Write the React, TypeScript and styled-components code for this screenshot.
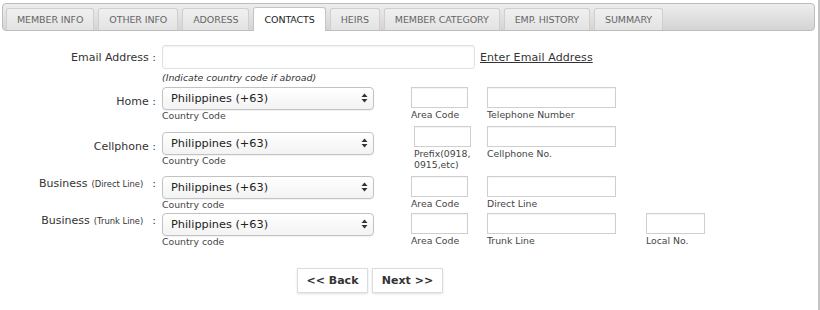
import styled, { createGlobalStyle } from 'styled-components'

const GlobalStyle = createGlobalStyle`
  html, body {
    margin: 0;
    padding: 0;
    background: #fff;
    font-family: "DejaVu Sans", Verdana, sans-serif;
    color: #333;
  }
`

const tabs = [
  'MEMBER INFO',
  'OTHER INFO',
  'ADORESS',
  'CONTACTS',
  'HEIRS',
  'MEMBER CATEGORY',
  'EMP. HISTORY',
  'SUMMARY',
]

const ArrowIcon = () => (
  <svg width="7" height="10" viewBox="0 0 7 10">
    <path d="M3.5 0.5 L6.5 4 L0.5 4 Z" fill="#333" />
    <path d="M3.5 9.5 L6.5 6 L0.5 6 Z" fill="#333" />
  </svg>
)

const CountrySelect = ({ caption, top = 0 }: { caption: string; top?: number }) => (
  <SelectCell $top={top}>
    <SelectBox>
      <Select defaultValue="PH">
        <option value="PH">Philippines (+63)</option>
      </Select>
      <SelectArrow>
        <ArrowIcon />
      </SelectArrow>
    </SelectBox>
    <Caption>{caption}</Caption>
  </SelectCell>
)

const PhoneField = ({
  col,
  width,
  caption,
  offset = 0,
}: {
  col: number
  width: number
  caption: React.ReactNode
  offset?: number
}) => (
  <PhoneCell $col={col} $offset={offset}>
    <TextInput $width={width} />
    <Caption>{caption}</Caption>
  </PhoneCell>
)

const App = () => {
  return (
    <>
      <GlobalStyle />
      <Panel>
        <TabBar>
          {tabs.map((t) => (
            <Tab key={t} $active={t === 'CONTACTS'}>
              {t}
            </Tab>
          ))}
        </TabBar>

        <Form>
          <EmailRow>
            <EmailLabel>Email Address :</EmailLabel>
            <EmailInput />
            <EmailLink>Enter Email Address</EmailLink>
          </EmailRow>
          <Hint>(Indicate country code if abroad)</Hint>

          <Row $gap={5}>
            <Label $top={8}>Home :</Label>
            <CountrySelect caption="Country Code" />
            <PhoneField col={76} width={57} caption="Area Code" />
            <PhoneField col={159} width={129} caption="Telephone Number" />
          </Row>

          <Row $gap={6}>
            <Label $top={14}>Cellphone :</Label>
            <CountrySelect caption="Country Code" top={6} />
            <PhoneField
              col={76}
              width={57}
              offset={3}
              caption={
                <>
                  Prefix(0918,
                  <br />
                  0915,etc)
                </>
              }
            />
            <PhoneField col={159} width={129} caption="Cellphone No." />
          </Row>

          <Row $gap={3}>
            <Label $top={1}>
              Business<Small>(Direct Line)</Small>:
            </Label>
            <CountrySelect caption="Country code" />
            <PhoneField col={76} width={57} caption="Area Code" />
            <PhoneField col={159} width={129} caption="Direct Line" />
          </Row>

          <Row $gap={0}>
            <Label $top={1}>
              Business<Small>(Trunk Line)</Small>:
            </Label>
            <CountrySelect caption="Country code" />
            <PhoneField col={76} width={57} caption="Area Code" />
            <PhoneField col={159} width={129} caption="Trunk Line" />
            <PhoneField col={76} width={59} caption="Local No." />
          </Row>

          <Buttons>
            <Button>&lt;&lt; Back</Button>
            <Button>Next &gt;&gt;</Button>
          </Buttons>
        </Form>
      </Panel>
    </>
  )
}

const Panel = styled.div`
  width: 820px;
  height: 310px;
  box-sizing: border-box;
  border-right: 2px solid #c4c4c4;
  padding: 3px 3px 0 2px;
`

const TabBar = styled.div`
  display: flex;
  align-items: flex-end;
  gap: 4px;
  height: 28px;
  box-sizing: border-box;
  padding: 0 0 0 3px;
  background: linear-gradient(#ededed, #d4d4d4);
  border: 1px solid #bdbdbd;
  border-radius: 4px;
`

const Tab = styled.div<{ $active: boolean }>`
  height: ${(p) => (p.$active ? 24 : 22)}px;
  box-sizing: border-box;
  padding: 0 10px;
  display: flex;
  align-items: center;
  font-size: 9.5px;
  letter-spacing: -0.1px;
  color: ${(p) => (p.$active ? '#222' : '#666')};
  background: ${(p) => (p.$active ? '#fff' : 'linear-gradient(#f0f0f0, #e3e3e3)')};
  border: 1px solid ${(p) => (p.$active ? '#c4c4c4' : '#cfcfcf')};
  border-bottom: none;
  border-radius: 3px 3px 0 0;
  margin-bottom: ${(p) => (p.$active ? -1 : 0)}px;
`

const Form = styled.div`
  padding-top: 14px;
`

const Label = styled.div<{ $top: number }>`
  width: 158px;
  flex: none;
  box-sizing: border-box;
  padding-right: 4px;
  margin-top: ${(p) => p.$top}px;
  text-align: right;
  font-size: 11px;
  line-height: 13px;
  color: #333;
  white-space: nowrap;
`

const EmailLabel = styled(Label).attrs({ $top: 0 })``

const Small = styled.span`
  font-size: 8.4px;
  margin: 0 9px 0 4px;
`

const EmailRow = styled.div`
  display: flex;
  align-items: center;
`

const EmailInput = styled.input`
  width: 313px;
  height: 24px;
  box-sizing: border-box;
  border: 1px solid #e0e0e0;
  border-radius: 3px;
  box-shadow: inset 0 1px 2px rgba(0, 0, 0, 0.06);
  margin: 0 0 0 2px;
`

const EmailLink = styled.a`
  margin-left: 5px;
  font-size: 11px;
  color: #333;
  text-decoration: underline;
  letter-spacing: 0.1px;
`

const Hint = styled.div`
  margin: 3px 0 4px 160px;
  font-size: 9.4px;
  line-height: 11px;
  font-style: italic;
  color: #333;
`

const Row = styled.div<{ $gap: number }>`
  display: flex;
  align-items: flex-start;
  margin-bottom: ${(p) => p.$gap}px;
`

const SelectCell = styled.div<{ $top: number }>`
  width: 251px;
  flex: none;
  padding: ${(p) => p.$top}px 0 0 2px;
  box-sizing: border-box;
`

const SelectBox = styled.div`
  position: relative;
  width: 212px;
`

const Select = styled.select`
  appearance: none;
  display: block;
  width: 212px;
  height: 23px;
  margin: 0;
  padding: 0 0 0 8px;
  font-family: inherit;
  font-size: 11.3px;
  color: #222;
  background: linear-gradient(#fff, #f3f3f3);
  border: 1px solid #c2c2c2;
  border-radius: 4px;
  box-shadow: 0 1px 1px rgba(0, 0, 0, 0.06);
`

const SelectArrow = styled.span`
  position: absolute;
  right: 6px;
  top: 6px;
  line-height: 0;
`

const Caption = styled.div`
  font-size: 9.3px;
  color: #444;
  line-height: 11px;
`

const PhoneCell = styled.div<{ $col: number; $offset: number }>`
  width: ${(p) => p.$col}px;
  flex: none;
  padding-left: ${(p) => p.$offset}px;
  box-sizing: border-box;

  ${Caption} {
    margin-top: 1px;
  }
`

const TextInput = styled.input<{ $width: number }>`
  display: block;
  width: ${(p) => p.$width}px;
  height: 21px;
  box-sizing: border-box;
  border: 1px solid #cfcfcf;
  box-shadow: inset 0 1px 1px rgba(0, 0, 0, 0.05);
  margin: 0;
`

const Buttons = styled.div`
  display: flex;
  gap: 4px;
  padding: 21px 0 0 295px;
`

const Button = styled.button`
  width: 71px;
  height: 25px;
  font-family: inherit;
  font-size: 11px;
  font-weight: 700;
  color: #333;
  background: #fff;
  border: 1px solid #dcdcdc;
  box-shadow: 0 1px 2px rgba(0, 0, 0, 0.12);
  cursor: pointer;
`

export default App
